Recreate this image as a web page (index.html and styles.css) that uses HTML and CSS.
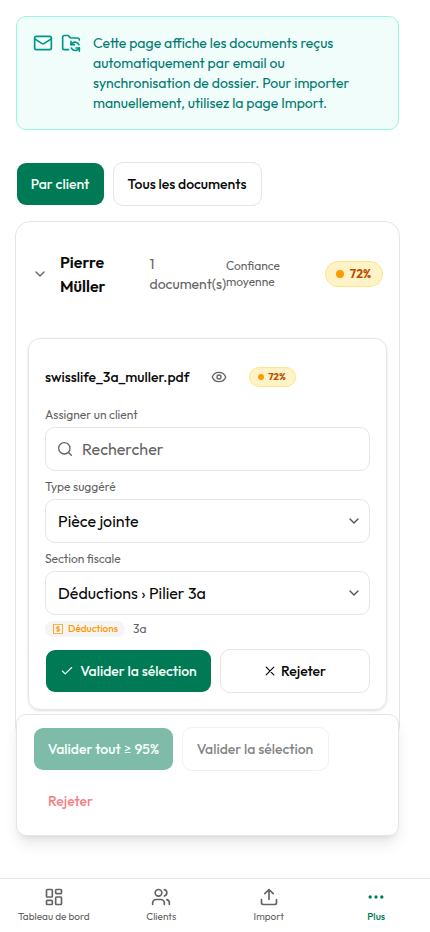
FILE: index.html
```html
<!DOCTYPE html>
<html lang="fr">
<head>
<meta charset="utf-8">
<meta name="viewport" content="width=device-width, initial-scale=1">
<title>Documents reçus</title>
<link rel="stylesheet" href="styles.css">
</head>
<body>
<main class="page">
  <section class="notice">
    <div class="notice-icons">
      <svg class="icon" width="20" height="20" viewBox="0 0 24 24"><rect x="2" y="4" width="20" height="16" rx="2"/><path d="m22 7-8.97 5.7a1.94 1.94 0 0 1-2.06 0L2 7"/></svg>
      <svg class="icon" width="20" height="20" viewBox="0 0 24 24"><path d="M9 20H4a2 2 0 0 1-2-2V5a2 2 0 0 1 2-2h3.9a2 2 0 0 1 1.69.9l.81 1.2a2 2 0 0 0 1.67.9H20a2 2 0 0 1 2 2v.5"/><path d="M12 10v4h4"/><path d="m12 14 1.535-1.605a5 5 0 0 1 8 1.5"/><path d="M22 22v-4h-4"/><path d="m22 18-1.535 1.605a5 5 0 0 1-8-1.5"/></svg>
    </div>
    <p class="notice-text">Cette page affiche les documents reçus<br>automatiquement par email ou<br>synchronisation de dossier. Pour importer<br>manuellement, utilisez la page Import.</p>
  </section>

  <div class="tabs">
    <button class="btn primary tab-client"><span>Par client</span></button>
    <button class="btn outline tab-all"><span>Tous les documents</span></button>
  </div>

  <section class="group">
    <header class="group-head">
      <svg class="icon chevron" width="16" height="16" viewBox="0 0 24 24"><path d="m6 9 6 6 6-6"/></svg>
      <h2 class="name">Pierre<br>Müller</h2>
      <p class="count">1<br>document(s)</p>
      <p class="confidence">Confiance<br>moyenne</p>
      <span class="badge badge-lg"><i></i><b>72%</b></span>
    </header>

    <article class="doc">
      <div class="doc-head">
        <h3 class="file">swisslife_3a_muller.pdf</h3>
        <svg class="icon eye" width="16" height="16" viewBox="0 0 24 24"><path d="M2.062 12.348a1 1 0 0 1 0-.696 10.75 10.75 0 0 1 19.876 0 1 1 0 0 1 0 .696 10.75 10.75 0 0 1-19.876 0"/><circle cx="12" cy="12" r="3"/></svg>
        <span class="badge badge-sm"><i></i><b>72%</b></span>
      </div>
      <div class="label">Assigner un client</div>
      <div class="field search">
        <svg class="icon" width="16" height="16" viewBox="0 0 24 24"><circle cx="11" cy="11" r="8.5"/><path d="m21.5 21.5-4.3-4.3"/></svg>
        <span>Rechercher</span>
      </div>
      <div class="label">Type suggéré</div>
      <div class="field select"><span>Pièce jointe</span><svg class="icon" width="16" height="16" viewBox="0 0 24 24"><path d="m6 9 6 6 6-6"/></svg></div>
      <div class="label">Section fiscale</div>
      <div class="field select"><span>Déductions › Pilier 3a</span><svg class="icon" width="16" height="16" viewBox="0 0 24 24"><path d="m6 9 6 6 6-6"/></svg></div>
      <div class="tags">
        <span class="tag"><svg class="receipt" width="12" height="12" viewBox="0 0 12 12"><path class="edge" d="M1.5 1v10M10.5 1v10"/><path d="M2 1.5h8M2 10.5h8" stroke-opacity=".7"/><path d="M7.7 4H5.2a1 1 0 0 0 0 2h1.6a1 1 0 0 1 0 2H4.3M6 3v6"/></svg><span>Déductions</span></span>
        <span class="code">3a</span>
      </div>
      <div class="actions">
        <button class="btn primary validate"><svg class="icon" width="14" height="14" viewBox="0 0 24 24"><path d="M20 6 9 17l-5-5"/></svg><span>Valider la sélection</span></button>
        <button class="btn outline reject"><svg class="icon" width="14" height="14" viewBox="0 0 24 24"><path d="M18.5 5.5l-13 13M5.5 5.5l13 13"/></svg><span>Rejeter</span></button>
      </div>
    </article>
  </section>

  <section class="bulk">
    <button class="btn primary bulk-all" disabled><span>Valider tout ≥ 95%</span></button>
    <button class="btn outline bulk-some" disabled><span>Valider la sélection</span></button>
    <button class="btn danger" disabled><span>Rejeter</span></button>
  </section>
</main>

<nav class="nav">
  <a class="item"><svg class="icon" width="20" height="20" viewBox="0 0 24 24"><rect x="3" y="3" width="7" height="9" rx="1"/><rect x="14" y="3" width="7" height="5" rx="1"/><rect x="14" y="12" width="7" height="9" rx="1"/><rect x="3" y="16" width="7" height="5" rx="1"/></svg><span>Tableau de bord</span></a>
  <a class="item"><svg class="icon" width="20" height="20" viewBox="0 0 24 24"><path d="M16 21v-2a4 4 0 0 0-4-4H6a4 4 0 0 0-4 4v2"/><circle cx="9" cy="7" r="4"/><path d="M22 21v-2a4 4 0 0 0-3-3.87M16 3.13a4 4 0 0 1 0 7.75"/></svg><span>Clients</span></a>
  <a class="item"><svg class="icon" width="20" height="20" viewBox="0 0 24 24"><path d="M12 3v12M17 8l-5-5-5 5M21 15v4a2 2 0 0 1-2 2H5a2 2 0 0 1-2-2v-4"/></svg><span>Import</span></a>
  <a class="item active"><svg class="icon" width="20" height="20" viewBox="0 0 24 24"><circle cx="12" cy="12" r="1"/><circle cx="19" cy="12" r="1"/><circle cx="5" cy="12" r="1"/></svg><span>Plus</span></a>
</nav>
</body>
</html>
```
FILE: styles.css
```css
* { box-sizing: border-box; }
body {
  margin: 0;
  height: 932px;
  overflow: hidden;
  display: flex;
  flex-direction: column;
  background: #fff;
  color: #0a0a0a;
  font-family: Outfit, Lato, sans-serif;
  font-size: 14px;
  line-height: 20px;
  white-space: nowrap;
}
p, h2, h3 { margin: 0; }
button { font: inherit; }
.icon { flex: none; fill: none; stroke: currentColor; stroke-width: 2; stroke-linecap: round; stroke-linejoin: round; }
.page { flex: none; height: 878px; padding: 16px; }

.notice {
  display: flex;
  gap: 12px;
  width: 383px;
  height: 114px;
  padding: 16px;
  border: 1px solid #96f7e4;
  border-radius: 10px;
  background: #f0fdfa;
  color: #00786f;
}
.notice-icons { display: flex; gap: 8px; color: #009689; }

.tabs { display: flex; gap: 8px; margin-top: 32px; }
.btn {
  display: flex;
  flex: none;
  align-items: center;
  justify-content: center;
  gap: 4px;
  height: 44px;
  padding: 0;
  border: 1px solid transparent;
  border-radius: 10px;
  background: #fff;
  background-clip: padding-box;
  color: #0a0a0a;
  font-weight: 500;
}
.primary { background-color: #007a55; color: #f0fdf6; }
.outline { border-color: #e5e5e5; }
.tab-client { width: 89px; padding-right: 1px; }
.tab-all { width: 149px; padding-right: 1px; }

.group {
  width: 385px;
  height: 520px;
  margin: 15px 0 0 -1px;
  padding: 0 12px;
  border: 1px solid #e5e5e5;
  border-radius: 15px;
}
.group-head { display: flex; align-items: center; height: 104px; padding: 0 4px; }
.chevron { color: #636363; }
.name { width: 89.5px; margin-left: 12px; font-size: 16px; line-height: 24px; font-weight: 600; }
.count { width: 76.5px; color: #636363; }
.confidence { width: 99px; color: #636363; font-size: 12px; line-height: 16px; }
.badge {
  display: flex;
  flex: none;
  align-items: center;
  justify-content: center;
  border: 1px solid #fee685;
  border-radius: 20px;
  background: #fef3c6;
  color: #bb4d00;
}
.badge i { border-radius: 50%; background: #fe9a00; }
.badge b { font-weight: 700; }
.badge-lg { width: 58px; height: 26px; padding-right: 1px; gap: 6px; font-size: 12px; }
.badge-lg i { width: 8px; height: 8px; }
.badge-sm { width: 47px; height: 20px; padding-right: 1px; gap: 4px; font-size: 10px; }
.badge-sm i { width: 6px; height: 6px; }

.doc {
  width: 359px;
  height: 372px;
  margin-top: 12px;
  padding: 16px;
  border: 1px solid #e5e5e5;
  border-radius: 12px;
  box-shadow: 0 1px 3px rgb(0 0 0 / 10%), 0 1px 2px -1px rgb(0 0 0 / 10%);
}
.doc-head { display: flex; align-items: center; height: 44px; }
.file { width: 166px; font-size: 14px; font-weight: 500; }
.eye { color: #636363; margin-right: 22px; }
.label { height: 16px; margin: 8px 0 4px; color: #636363; font-size: 12px; line-height: 16px; }
.field {
  display: flex;
  align-items: center;
  height: 44px;
  padding: 0 12px;
  border: 1px solid #e5e5e5;
  border-radius: 10px;
  font-size: 16px;
}
.search { gap: 9px; padding-left: 11px; color: #636363; }
.select { justify-content: space-between; padding-right: 7px; }
.select .icon { color: #525252; }
.tags { display: flex; align-items: center; gap: 8px; height: 16px; margin-top: 6px; color: #636363; font-size: 12px; }
.tag {
  display: flex;
  align-items: center;
  gap: 4px;
  width: 80px;
  height: 16px;
  padding-left: 7px;
  border-radius: 8px;
  background: #f5f5f5;
  color: #fe9a00;
  font-size: 10px;
  font-weight: 500;
}
.receipt { flex: none; fill: none; stroke: #fe9a00; }
.edge { stroke-opacity: .8; }
.actions { display: flex; gap: 8px; margin-top: 12px; }
.validate { width: 167px; gap: 6px; }
.reject { width: 150px; padding-right: 1px; }

.bulk {
  position: absolute;
  left: 16px;
  top: 714px;
  display: flex;
  flex-wrap: wrap;
  align-content: flex-start;
  gap: 8px;
  width: 383px;
  height: 122px;
  padding: 12px 16px;
  border: 1px solid #e5e5e5;
  border-radius: 10px;
  background: #fff;
  box-shadow: 0 10px 15px -3px rgb(0 0 0 / 10%), 0 4px 6px -4px rgb(0 0 0 / 10%);
}
.btn:disabled { opacity: .5; }
.bulk-all { width: 141px; }
.bulk-some { width: 147px; padding-right: 1px; }
.danger { width: 75px; color: #e7000b; }

.nav {
  position: relative;
  display: flex;
  flex: none;
  height: 54px;
  padding-top: 8px;
  border-top: 1px solid #e5e5e5;
  background: #fff;
}
.item { display: flex; flex: 1; flex-direction: column; align-items: center; gap: 2px; color: #636363; font-size: 10px; line-height: 15px; }
.active { color: #007a55; font-weight: 500; }
```
